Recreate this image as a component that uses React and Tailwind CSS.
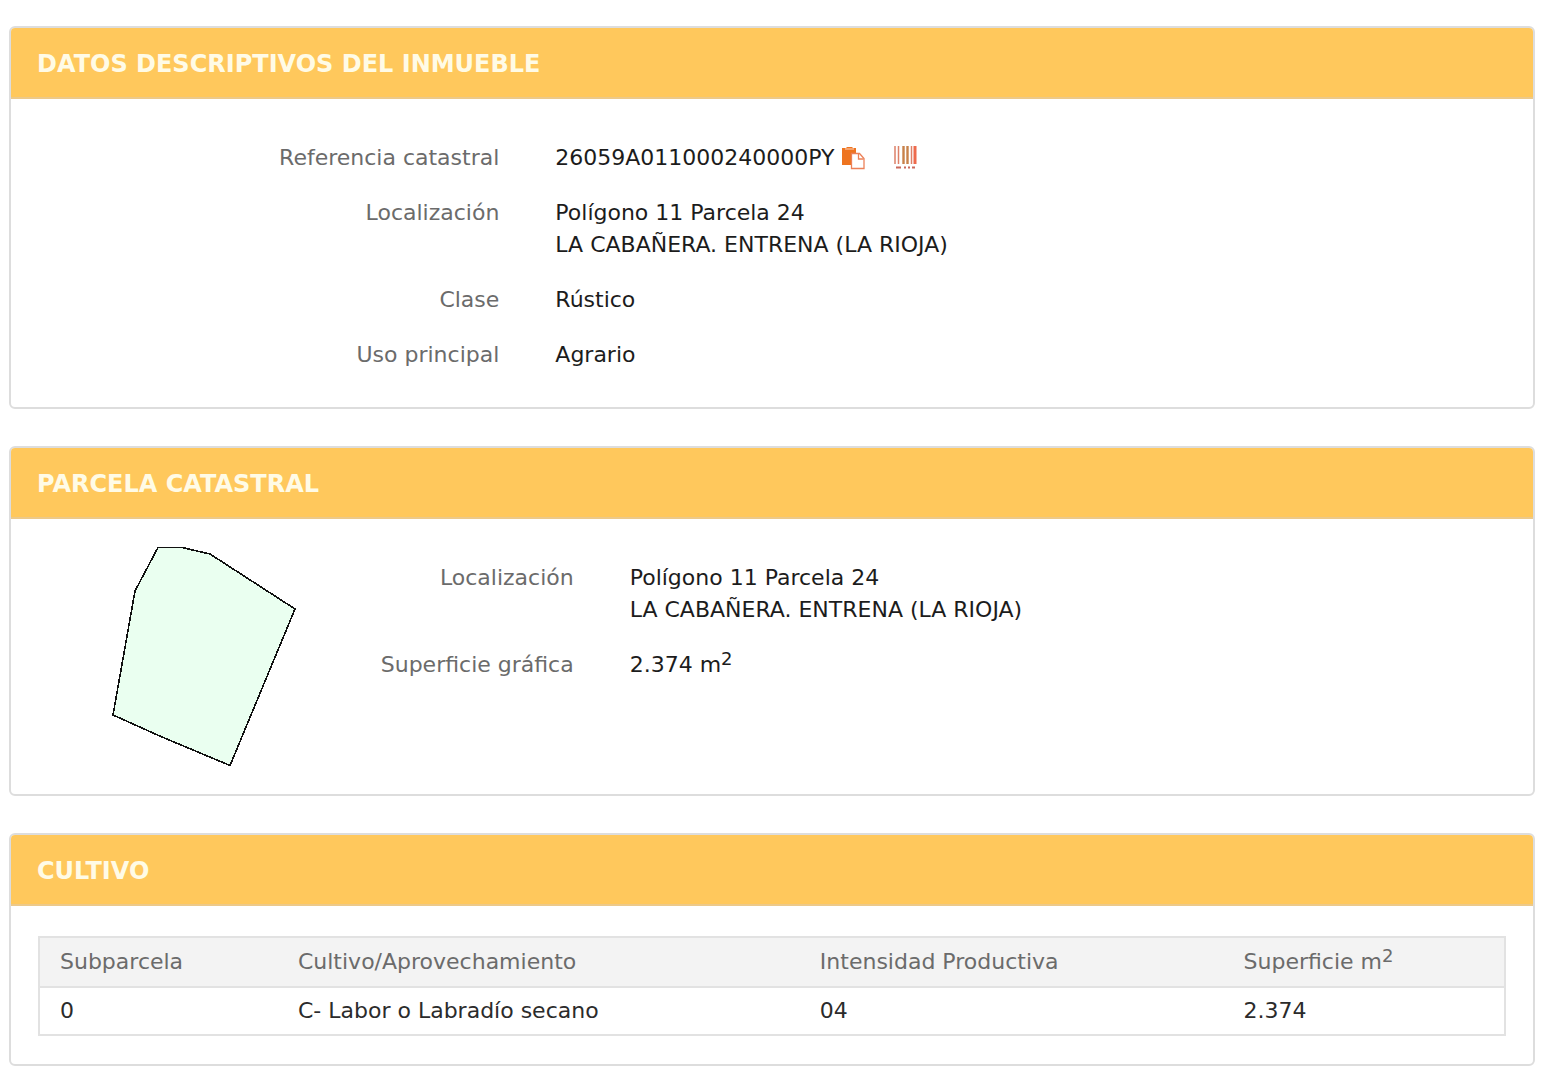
import React from "react";

function Card({ title, children }) {
  return (
    <section className="overflow-hidden rounded-md border-2 border-[#dddddd] bg-white">
      <h2 className="border-b-2 border-[#ecc98a] bg-[#ffc85c] px-[26px] pt-5 pb-[17px] text-[24px] leading-8 font-bold text-[#fffbe6]">
        {title}
      </h2>
      {children}
    </section>
  );
}

function Row({ label, columns, children }) {
  return (
    <div className={`grid ${columns}`}>
      <dt className="pr-7 text-right text-[#6b6b6b]">{label}</dt>
      <dd className="pl-7 text-[#1c1c1c]">{children}</dd>
    </div>
  );
}

function Squared() {
  return <sup className="top-[-7px] text-[18px] leading-none">2</sup>;
}

function CopyIcon() {
  return (
    <svg viewBox="0 0 24 24" className="size-6" aria-hidden="true">
      <path d="M1 2h4l1-1h5l1 1h3v5h-4v12H1z" fill="#ee7420" />
      <path d="M4 3h9" stroke="#f8b58a" strokeWidth="1.5" />
      <path d="M10.500 7.5h8l4.500 5v10h-12.500z" fill="#fff" stroke="#ec8158" strokeWidth="1.3" />
      <path d="M17.5 7.5v5.500h5" fill="none" stroke="#ec8158" strokeWidth="1.3" />
    </svg>
  );
}

function BarcodeIcon() {
  return (
    <svg viewBox="0 0 24 24" className="size-6" aria-hidden="true">
      <path d="M2 0v18M5.500 0v18M18.500 0v18" stroke="#dd8068" strokeWidth="1.5" />
      <path d="M10.500 0v18M14.500 0v18" stroke="#c8824a" strokeWidth="2.4" />
      <path d="M22 0v18" stroke="#ee6a4c" strokeWidth="3" />
      <path d="M3 21.500h5M11 21.500h2M15 21.500h2M19 21.500h3" stroke="#c9695c" strokeWidth="2" />
    </svg>
  );
}

function ParcelShape() {
  return (
    <svg viewBox="0 0 184 221" className="h-[221px] w-[184px]" role="img" aria-label="Parcela" shapeRendering="crispEdges">
      <path
        d="M46 1.500H70L98 8L183 63L118 219.500L50 191L1 169L23 45Z"
        fill="#eafff0"
        stroke="#111"
        strokeWidth="1.6"
      />
    </svg>
  );
}

const HALF = "grid-cols-[1fr_2fr]";
const NARROW = "grid-cols-[23%_1fr]";

export default function App() {
  return (
    <main className="flex flex-col gap-[37px] bg-white pt-[26px] pr-2 pb-4 pl-[9px] font-['DejaVu_Sans',Verdana,sans-serif] text-[22px] leading-8">
      <Card title="DATOS DESCRIPTIVOS DEL INMUEBLE">
        <dl className="flex flex-col gap-[23px] px-[27px] pt-[43px] pb-9">
          <Row label="Referencia catastral" columns={HALF}>
            <div className="flex items-center">
              <span>26059A011000240000PY</span>
              <button type="button" aria-label="Copiar referencia" className="ml-1.5">
                <CopyIcon />
              </button>
              <button type="button" aria-label="Código de barras" className="ml-7">
                <BarcodeIcon />
              </button>
            </div>
          </Row>
          <Row label="Localización" columns={HALF}>
            Polígono 11 Parcela 24
            <br />
            LA CABAÑERA. ENTRENA (LA RIOJA)
          </Row>
          <Row label="Clase" columns={HALF}>Rústico</Row>
          <Row label="Uso principal" columns={HALF}>Agrario</Row>
        </dl>
      </Card>

      <Card title="PARCELA CATASTRAL">
        <div className="grid grid-cols-[20%_1fr] px-[27px] pt-[27px] pb-[27px]">
          <div className="flex justify-end pr-9">
            <ParcelShape />
          </div>
          <dl className="flex flex-col gap-[23px] pt-4">
            <Row label="Localización" columns={NARROW}>
              Polígono 11 Parcela 24
              <br />
              LA CABAÑERA. ENTRENA (LA RIOJA)
            </Row>
            <Row label="Superficie gráfica" columns={NARROW}>
              2.374 m<Squared />
            </Row>
          </dl>
        </div>
      </Card>

      <Card title="CULTIVO">
        <div className="px-[27px] pt-[30px] pb-7">
          <table className="w-full table-fixed border-2 border-[#e2e2e2] text-left">
            <colgroup>
              <col className="w-[16.3%]" />
              <col className="w-[35.6%]" />
              <col className="w-[28.9%]" />
              <col className="w-[19.2%]" />
            </colgroup>
            <thead>
              <tr className="border-b-2 border-[#e2e2e2] bg-[#f3f3f3] text-[#6b6b6b]">
                <th className="py-2 pl-5 font-normal">Subparcela</th>
                <th className="py-2 pl-5 font-normal">Cultivo/Aprovechamiento</th>
                <th className="py-2 pl-5 font-normal">Intensidad Productiva</th>
                <th className="py-2 pl-5 font-normal">
                  Superficie m<Squared />
                </th>
              </tr>
            </thead>
            <tbody>
              <tr className="text-[#2b2b2b]">
                <td className="py-[7px] pl-5">0</td>
                <td className="py-[7px] pl-5">C- Labor o Labradío secano</td>
                <td className="py-[7px] pl-5">04</td>
                <td className="py-[7px] pl-5">2.374</td>
              </tr>
            </tbody>
          </table>
        </div>
      </Card>
    </main>
  );
}
